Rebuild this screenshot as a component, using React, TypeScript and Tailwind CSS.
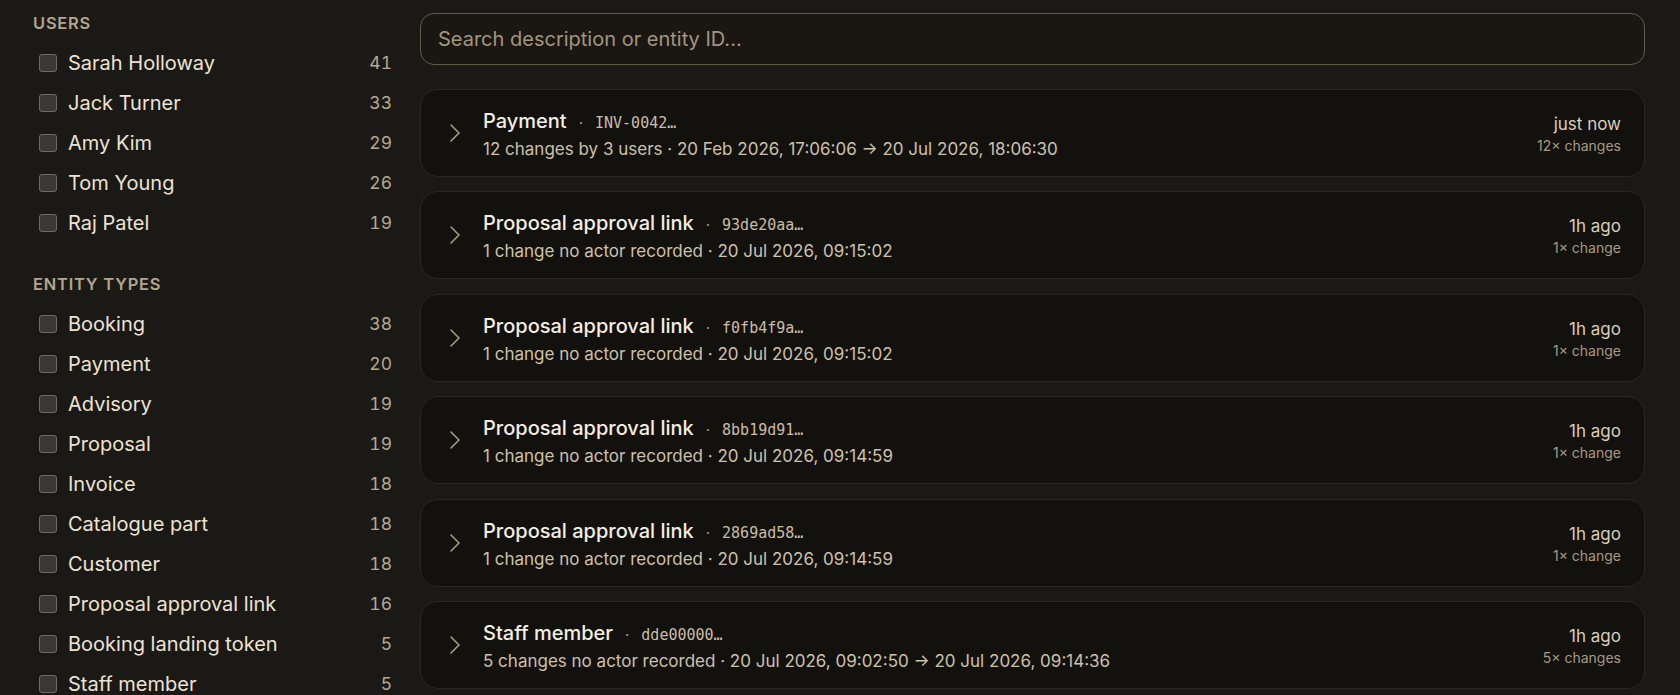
import { ChevronRight } from "lucide-react";

type Facet = { label: string; count: number };

const USERS: Facet[] = [
  { label: "Sarah Holloway", count: 41 },
  { label: "Jack Turner", count: 33 },
  { label: "Amy Kim", count: 29 },
  { label: "Tom Young", count: 26 },
  { label: "Raj Patel", count: 19 },
];

const ENTITY_TYPES: Facet[] = [
  { label: "Booking", count: 38 },
  { label: "Payment", count: 20 },
  { label: "Advisory", count: 19 },
  { label: "Proposal", count: 19 },
  { label: "Invoice", count: 18 },
  { label: "Catalogue part", count: 18 },
  { label: "Customer", count: 18 },
  { label: "Proposal approval link", count: 16 },
  { label: "Booking landing token", count: 5 },
  { label: "Staff member", count: 5 },
];

type Group = {
  title: string;
  id: string;
  summary: string;
  when: string;
  changes: string;
};

const GROUPS: Group[] = [
  {
    title: "Payment",
    id: "INV-0042…",
    summary: "12 changes by 3 users · 20 Feb 2026, 17:06:06 → 20 Jul 2026, 18:06:30",
    when: "just now",
    changes: "12× changes",
  },
  {
    title: "Proposal approval link",
    id: "93de20aa…",
    summary: "1 change no actor recorded · 20 Jul 2026, 09:15:02",
    when: "1h ago",
    changes: "1× change",
  },
  {
    title: "Proposal approval link",
    id: "f0fb4f9a…",
    summary: "1 change no actor recorded · 20 Jul 2026, 09:15:02",
    when: "1h ago",
    changes: "1× change",
  },
  {
    title: "Proposal approval link",
    id: "8bb19d91…",
    summary: "1 change no actor recorded · 20 Jul 2026, 09:14:59",
    when: "1h ago",
    changes: "1× change",
  },
  {
    title: "Proposal approval link",
    id: "2869ad58…",
    summary: "1 change no actor recorded · 20 Jul 2026, 09:14:59",
    when: "1h ago",
    changes: "1× change",
  },
  {
    title: "Staff member",
    id: "dde00000…",
    summary: "5 changes no actor recorded · 20 Jul 2026, 09:02:50 → 20 Jul 2026, 09:14:36",
    when: "1h ago",
    changes: "5× changes",
  },
];

function FacetList({ heading, items }: { heading: string; items: Facet[] }) {
  return (
    <div>
      <div className="h-5 text-[16.4px] leading-5 font-semibold tracking-wider text-[#b3a68f] uppercase">
        {heading}
      </div>
      <ul className="mt-[10px]">
        {items.map((f) => (
          <li key={f.label}>
            <label className="flex h-10 items-center gap-[11px] pl-[6px] cursor-pointer">
              <input
                type="checkbox"
                className="appearance-none w-[18px] h-[18px] shrink-0 rounded-[3px] border border-[#6f6a62] bg-[#3a3834]"
              />
              <span className="flex-1 text-[20px] text-[#ebe3d4]">{f.label}</span>
              <span className="text-[17.5px] text-[#b5a891] tabular-nums">{f.count}</span>
            </label>
          </li>
        ))}
      </ul>
    </div>
  );
}

export default function App() {
  return (
    <div
      className="h-[695px] overflow-hidden bg-[#1b1915] flex"
      style={{ fontFamily: "Inter, 'Noto Sans', sans-serif" }}
    >
      {/* ── Filters sidebar ─────────────────────────────── */}
      <aside className="w-[392px] shrink-0 pl-[33px] pt-[13px] flex flex-col gap-[31px]">
        <FacetList heading="Users" items={USERS} />
        <FacetList heading="Entity types" items={ENTITY_TYPES} />
      </aside>

      {/* ── Audit groups ────────────────────────────────── */}
      <main className="flex-1 ml-[28px] mr-[35px] pt-[13px]">
        <input
          type="text"
          placeholder="Search description or entity ID..."
          className="w-full h-[52px] rounded-[14px] border border-[#655a49] bg-[#1a1713] px-[17px] text-[20px] text-[#e8e0d1] placeholder:text-[#a3957e] outline-none"
        />

        <div className="mt-6 flex flex-col gap-[14.4px]">
          {GROUPS.map((g, i) => (
            <div
              key={i}
              className="h-[88px] flex rounded-[18px] border border-[#2a2722] bg-[#13110e]"
            >
              <div className="w-[62px] shrink-0 flex items-center pl-[18px]">
                <ChevronRight className="w-8 h-8 text-[#a89a82]" strokeWidth={1.2} />
              </div>
              <div className="flex-1 pt-[17px]">
                <div className="flex items-baseline leading-7">
                  <span className="text-[20px] font-medium text-[#f3ede2]">{g.title}</span>
                  <span className="mx-3 text-[15px] text-[#a89a82]">·</span>
                  <span
                    className="text-[15px] text-[#c9bda7]"
                    style={{ fontFamily: "'DejaVu Sans Mono', 'Liberation Mono', monospace" }}
                  >
                    {g.id}
                  </span>
                </div>
                <div className="text-[17px] leading-6 text-[#cdc1ab]">{g.summary}</div>
              </div>
              <div className="pt-[22px] pr-[23px] text-right">
                <div className="text-[17px] leading-6 text-[#d9ceb9]">{g.when}</div>
                <div className="text-[14px] leading-5 text-[#a89a82]">{g.changes}</div>
              </div>
            </div>
          ))}
        </div>
      </main>
    </div>
  );
}
